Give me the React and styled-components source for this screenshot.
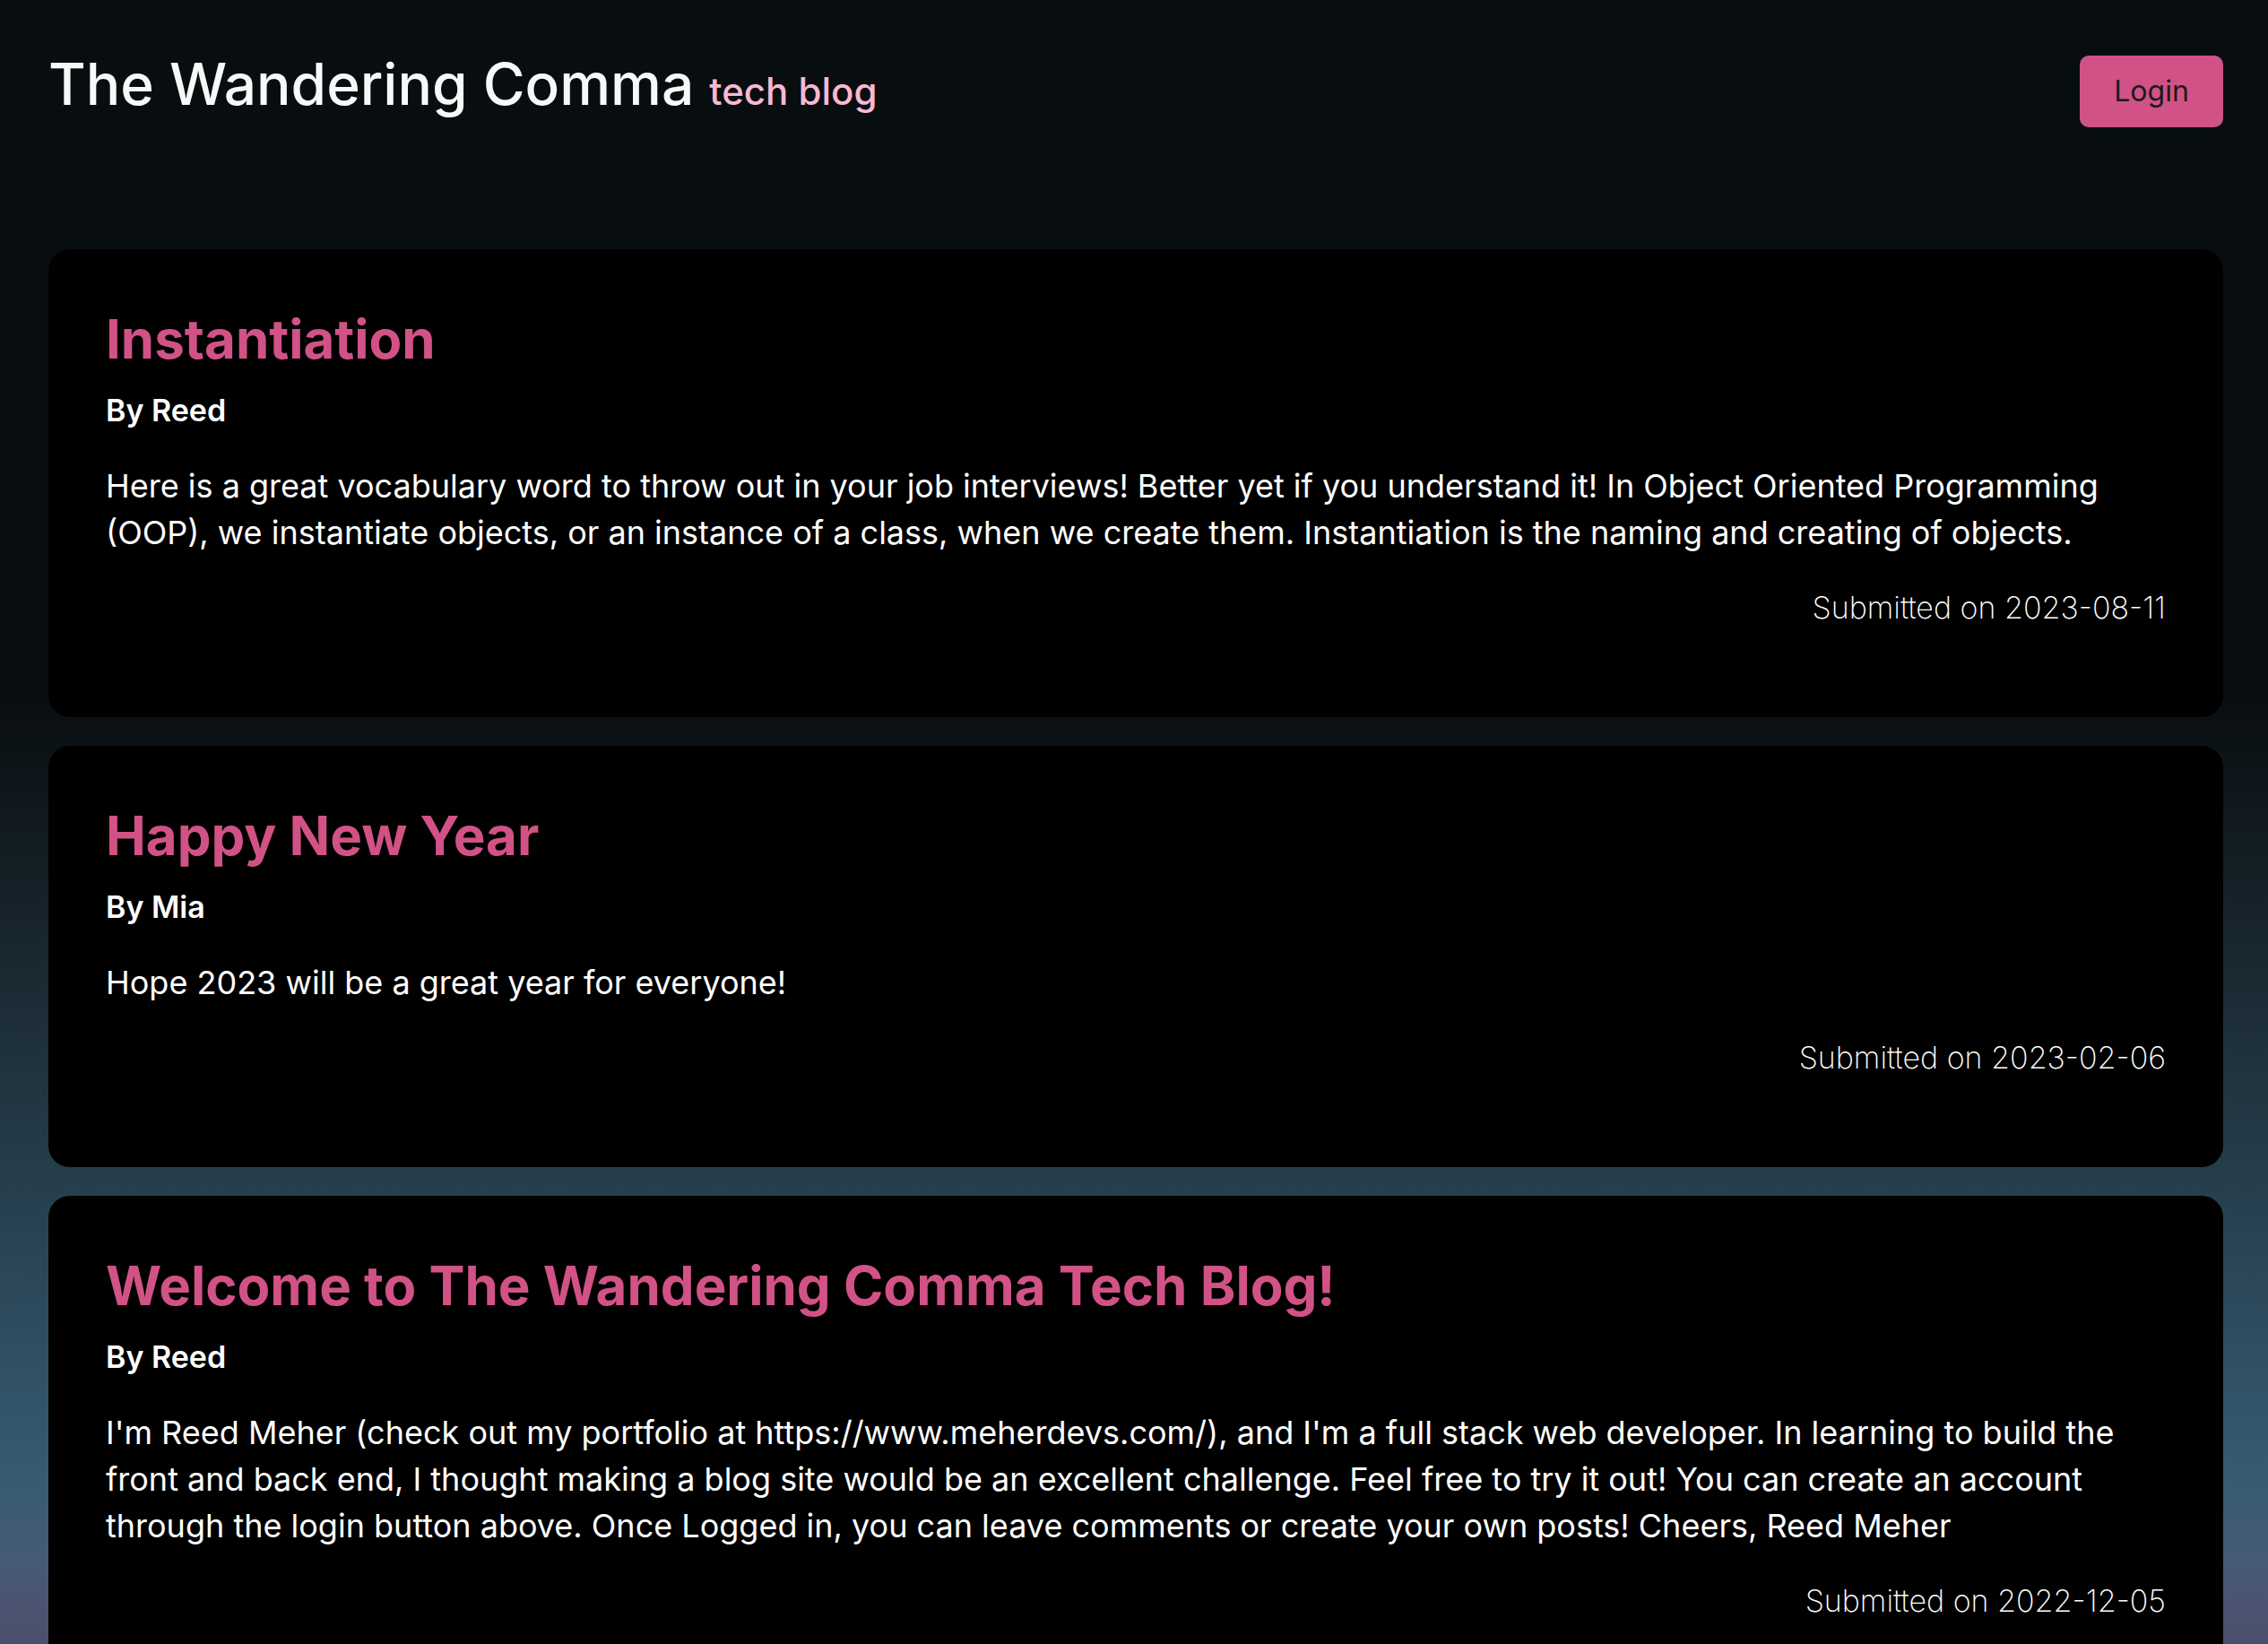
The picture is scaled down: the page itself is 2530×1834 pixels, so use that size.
import React from "react";
import styled, { createGlobalStyle } from "styled-components";

const Global = createGlobalStyle`
  * { box-sizing: border-box; }
  body {
    margin: 0;
    color: #fff;
    background: linear-gradient(#080d0f 0%, #080d0f 42%, #223642 67%, #365b72 90%, #465a77 95%, #4d4f6b 100%) no-repeat fixed;
    font-family: Inter, "Liberation Sans", sans-serif;
  }
`;
const Page = styled.div`
  height: 100vh;
  overflow: hidden;
  padding: 0 50px 0 54px;
`;
const Header = styled.header`
  display: flex;
  justify-content: space-between;
  align-items: flex-start;
  padding: 62px 0 136px;
`;
const Brand = styled.h1`
  margin: 0;
  font-size: 64px;
  line-height: 64px;
  font-weight: 500;
  color: #f5faf9;
`;
const Tagline = styled.span`
  font-size: 42px;
  color: #f7b8d3;
`;
const LoginButton = styled.button`
  width: 160px;
  height: 80px;
  padding: 0 0 2px;
  border: 0;
  border-radius: 10px;
  background: #d15286;
  color: #1a1a1a;
  font: 400 32px Inter, "Liberation Sans", sans-serif;
`;
const Posts = styled.main`
  display: flex;
  flex-direction: column;
  gap: 32px;
`;
const Card = styled.article`
  padding: 62px 64px 96px;
  border-radius: 24px;
  background: #000;
`;
const Title = styled.h2`
  margin: 0 0 16px;
  font-size: 60px;
  line-height: 76px;
  font-weight: 700;
  color: #d15286;
`;
const Author = styled.h3`
  margin: 0 0 32px;
  font-size: 34px;
  line-height: 52px;
  font-weight: 600;
`;
const Text = styled.p`
  margin: 0 0 32px;
  font-size: 36px;
  line-height: 52px;
`;
const Submitted = styled.p`
  margin: 0;
  font-size: 34px;
  line-height: 52px;
  font-weight: 200;
  text-align: right;
`;
const posts = [
  { title: "Instantiation", author: "Reed", date: "2023-08-11", text: "Here is a great vocabulary word to throw out in your job interviews! Better yet if you understand it! In Object Oriented Programming (OOP), we instantiate objects, or an instance of a class, when we create them. Instantiation is the naming and creating of objects." },
  { title: "Happy New Year", author: "Mia", date: "2023-02-06", text: "Hope 2023 will be a great year for everyone!" },
  { title: "Welcome to The Wandering Comma Tech Blog!", author: "Reed", date: "2022-12-05", text: "I'm Reed Meher (check out my portfolio at https://www.meherdevs.com/), and I'm a full stack web developer. In learning to build the front and back end, I thought making a blog site would be an excellent challenge. Feel free to try it out! You can create an account through the login button above. Once Logged in, you can leave comments or create your own posts! Cheers, Reed Meher" },
];
export default function App() {
  return (
    <Page>
      <Global />
      <Header>
        <Brand>The Wandering Comma <Tagline>tech blog</Tagline></Brand>
        <LoginButton type="button">Login</LoginButton>
      </Header>
      <Posts>
        {posts.map((p) => (
          <Card key={p.title}>
            <Title>{p.title}</Title>
            <Author>By {p.author}</Author>
            <Text>{p.text}</Text>
            <Submitted>Submitted on {p.date}</Submitted>
          </Card>
        ))}
      </Posts>
    </Page>
  );
}
